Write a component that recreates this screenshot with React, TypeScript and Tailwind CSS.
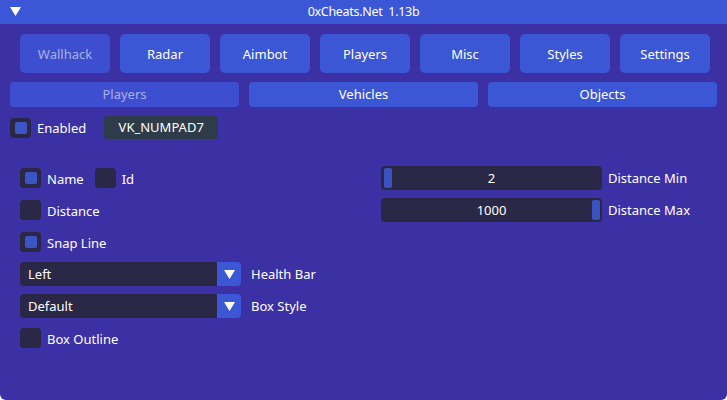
import React from "react";

const font = { fontFamily: '"Noto Sans", "Liberation Sans", sans-serif' };

function Check({ on }: { on?: boolean }) {
  return (
    <div className="w-[21px] h-[20px] rounded-[4px] bg-[#2b2746] flex items-center justify-center shrink-0">
      {on && <div className="w-[12px] h-[12px] rounded-[2px] bg-[#3b55c6]" />}
    </div>
  );
}

function CheckRow({ on, label }: { on?: boolean; label: string }) {
  return (
    <div className="flex items-center gap-[6px] h-[24px]">
      <Check on={on} />
      <span className="pt-[3px]">{label}</span>
    </div>
  );
}

function Tri({ className }: { className?: string }) {
  return (
    <svg width="11" height="9" viewBox="0 0 11 9" className={className}>
      <polygon points="0,0 11,0 5.5,9" fill="white" />
    </svg>
  );
}

function Combo({ value, label }: { value: string; label: string }) {
  return (
    <div className="flex items-center gap-[10px] h-[24px]">
      <div className="w-[221px] h-[24px] flex rounded-[4px] overflow-hidden">
        <div className="flex-1 bg-[#2b2746] flex items-center pl-[8px] pt-[2px]">{value}</div>
        <div className="w-[24px] bg-[#3b57d6] flex items-center justify-center">
          <Tri />
        </div>
      </div>
      <span className="pt-[2px]">{label}</span>
    </div>
  );
}

function Slider({ value, label, pos }: { value: string; label: string; pos: "min" | "max" }) {
  return (
    <div className="flex items-center gap-[6px] h-[24px]">
      <div className="relative w-[221px] h-[24px] rounded-[4px] bg-[#2b2746] flex items-center justify-center">
        <div
          className={`absolute top-[2px] bottom-[2px] w-[8px] rounded-[2px] bg-[#3a52bf] ${
            pos === "min" ? "left-[3px]" : "right-[2px]"
          }`}
        />
        <span className="relative pt-[2px]">{value}</span>
      </div>
      <span className="pt-[2px]">{label}</span>
    </div>
  );
}

export default function App() {
  const tabs = ["Wallhack", "Radar", "Aimbot", "Players", "Misc", "Styles", "Settings"];
  const sub = ["Players", "Vehicles", "Objects"];
  return (
    <div
      className="w-[727px] h-[400px] bg-[#3c31a4] text-white text-[13px] overflow-hidden rounded-b-[6px] flex flex-col"
      style={font}
    >
      <div className="h-[24px] bg-[#3b57d6] relative flex items-center justify-center shrink-0">
        <Tri className="absolute left-[10px] top-[7px]" />
        <span className="text-[12.5px] tracking-[-0.3px]">0xCheats.Net&nbsp;&nbsp;1.13b</span>
      </div>
      <div className="flex flex-col pt-[10px]">
        <div className="flex gap-[10px] px-[20px]">
          {tabs.map((t, i) => (
            <div
              key={t}
              className={`w-[90px] shrink-0 h-[39px] pt-[2px] rounded-[5px] flex items-center justify-center ${
                i === 0 ? "bg-[#3d4fd0] text-[#a9b0e6]" : "bg-[#3b57d6]"
              }`}
            >
              {t}
            </div>
          ))}
        </div>
        <div className="flex gap-[10px] px-[10px] mt-[9px]">
          {sub.map((t, i) => (
            <div
              key={t}
              className={`flex-1 h-[25px] pt-[1px] rounded-[4px] flex items-center justify-center ${
                i === 0 ? "bg-[#3d4fd0] text-[#a9b0e6]" : "bg-[#3b57d6]"
              }`}
            >
              {t}
            </div>
          ))}
        </div>
        <div className="flex items-center px-[10px] mt-[9px] h-[23px]">
          <Check on />
          <span className="ml-[6px] pt-[2px]">Enabled</span>
          <div className="ml-[18px] w-[114px] h-[23px] pt-[1px] rounded-[4px] bg-[#2e3c49] flex items-center justify-center">
            VK_NUMPAD7
          </div>
        </div>
        <div className="flex mt-[27px] px-[20px]">
          <div className="w-[361px] flex flex-col gap-[8px]">
            <div className="flex items-center gap-[11px]">
              <CheckRow on label="Name" />
              <CheckRow label="Id" />
            </div>
            <CheckRow label="Distance" />
            <CheckRow on label="Snap Line" />
            <Combo value="Left" label="Health Bar" />
            <Combo value="Default" label="Box Style" />
            <CheckRow label="Box Outline" />
          </div>
          <div className="flex flex-col gap-[8px]">
            <Slider value="2" label="Distance Min" pos="min" />
            <Slider value="1000" label="Distance Max" pos="max" />
          </div>
        </div>
      </div>
    </div>
  );
}
